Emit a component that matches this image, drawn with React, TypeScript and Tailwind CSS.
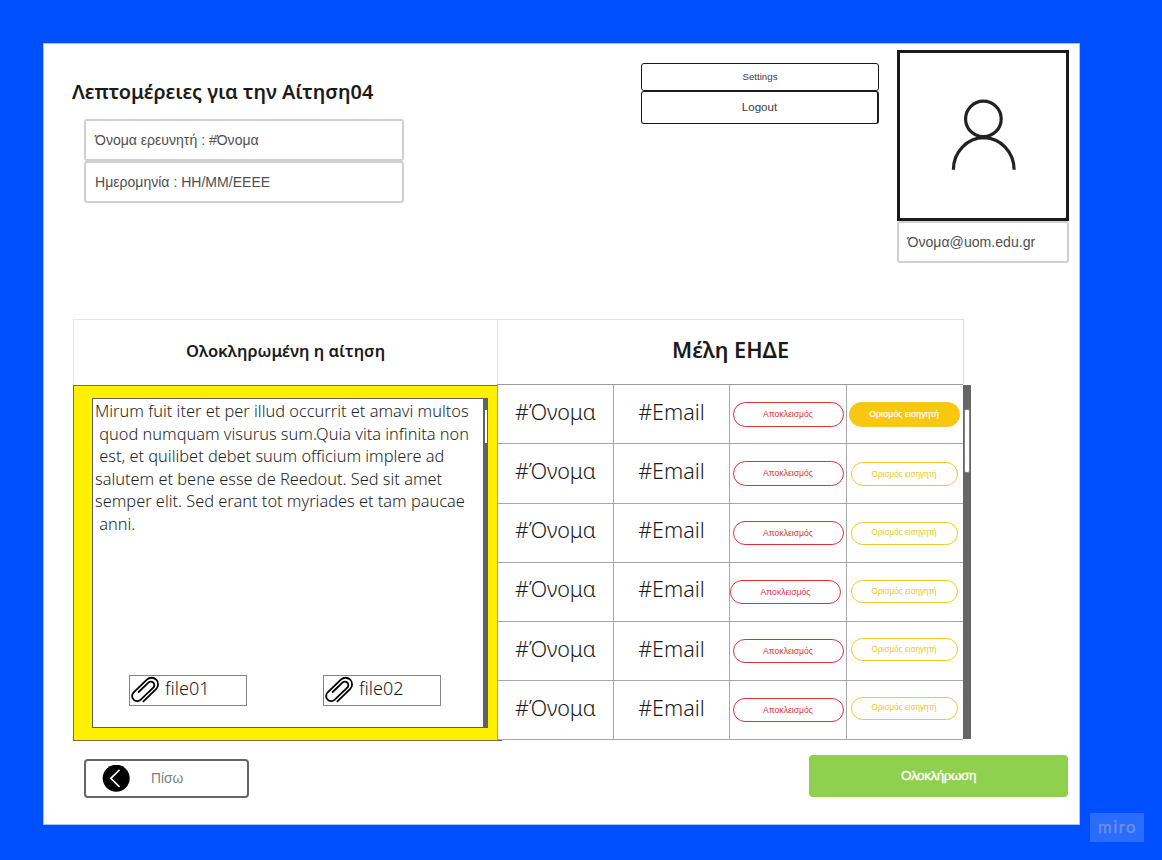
const noto = "font-['Noto_Sans',sans-serif]";

const members = [
  { h: "h-[59px]", text: "pb-[4px]", red: "h-[25px] mt-[1px]", redX: "", yellow: "h-[25px] w-[111px] mt-[1px] bg-[#fac710] text-white text-[8.8px] font-medium [-webkit-text-stroke:0.2px_#fff]" },
  { h: "h-[60px]", text: "pb-[4px]", red: "h-[25px]", redX: "", yellow: "h-[24px] w-[107px] mt-[1px] pt-[2px] text-[#ecc41c] text-[8.2px]" },
  { h: "h-[59px]", text: "pb-[6px]", red: "h-[24px]", redX: "", yellow: "h-[23px] w-[107px] pt-[1px] text-[#ecc41c] text-[8.2px]" },
  { h: "h-[59px]", text: "pb-[6px]", red: "h-[24px]", redX: "mr-[5px]", yellow: "h-[23px] w-[107px] -mt-[1px] pt-[1px] text-[#ecc41c] text-[8.2px]" },
  { h: "h-[59px]", text: "pb-[4px]", red: "h-[24px]", redX: "", yellow: "h-[23px] w-[107px] -mt-[3px] pt-[1px] text-[#ecc41c] text-[8.2px]" },
  { h: "h-[59px]", text: "pb-[4px]", red: "h-[24px]", redX: "", yellow: "h-[23px] w-[107px] -mt-[4px] pt-[1px] text-[#ecc41c] text-[8.2px]" },
];

const lines = [
  "Mirum fuit iter et per illud occurrit et amavi multos",
  " quod numquam visurus sum.Quia vita infinita non",
  " est, et quilibet debet suum officium implere ad",
  "salutem et bene esse de Reedout. Sed sit amet",
  "semper elit. Sed erant tot myriades et tam paucae",
  " anni.",
];

function Clip() {
  return (
    <svg width="30" height="30" viewBox="-15 -15 30 30" fill="none" stroke="#000" strokeWidth="1.8" strokeLinecap="round">
      <path
        transform="translate(0.3 0.3) rotate(46)"
        d="M6.6 9V-8.6A6.6 6.6 0 0 0 -6.6 -8.6V9.8A5.1 5.1 0 0 0 3.6 9.8V-7.6A3.5 3.5 0 0 0 -3.4 -7.6V6"
      />
    </svg>
  );
}

function FileBox({ name }: { name: string }) {
  return (
    <div className="flex h-[31px] w-[118px] border border-[#858585] bg-white">
      <div className="-mt-px">
        <Clip />
      </div>
      <span className={`${noto} ml-[5px] text-[18px] font-light leading-[24px]`}>{name}</span>
    </div>
  );
}

export default function App() {
  return (
    <div className="relative h-[860px] w-[1162px] overflow-hidden bg-[#0050ff] pl-[43px] pt-[43px] font-['Liberation_Sans',sans-serif] text-[#1a1a1a]">
      <main className="flex h-[782px] w-[1037px] flex-col border border-[#a8c4f5] bg-white">
        <header className="flex h-[275px] shrink-0 items-start">
          <div className="ml-[28px] w-[569px] pt-[35px]">
            <h1 className={`${noto} text-[19.9px] font-semibold leading-[26px]`}>Λεπτομέρειες για την Αίτηση04</h1>
            <div className="ml-[12px] mt-[14px] w-[320px] text-[14.05px] text-[#505050]">
              <div className="flex h-[42px] items-center rounded-[3px] border-2 border-[#d0d0d0] pl-[9px] pt-[2px]">Όνομα ερευνητή : #Όνομα</div>
              <div className="flex h-[42px] items-center rounded-[3px] border-2 border-[#d0d0d0] pl-[9px] pt-[2px]">Ημερομηνία : HH/MM/EEEE</div>
            </div>
          </div>
          <div className="mt-[19px] w-[238px] text-[#404040]">
            <div className="flex h-[28px] items-center justify-center rounded-[3px] border border-b-[1.5px] border-[#1a1a1a] text-[9.7px]">Settings</div>
            <div className="flex h-[33px] items-center justify-center rounded-[3px] border-b-[1.5px] border-l border-r-2 border-t-[1.5px] border-[#1a1a1a] pb-[2px] text-[11.6px]">Logout</div>
          </div>
          <div className="ml-[18px] mt-[6px] w-[172px]">
            <div className="flex h-[171px] items-center justify-center border-[3px] border-[#1a1a1a]">
              <svg width="80" height="80" viewBox="943.3 95.5 80 80" fill="none" stroke="#222" strokeWidth="3.2">
                <circle cx="983.7" cy="118.4" r="17.8" />
                <path d="M953.7 169.2A30.7 32 0 0 1 984.4 137.2A30.7 32 0 0 1 1014.4 169.2" />
              </svg>
            </div>
            <div className="flex h-[42px] items-center rounded-[3px] border-2 border-[#d0d0d0] pl-[8.5px] pt-[2px] text-[14.1px] text-[#505050]">Όνομα@uom.edu.gr</div>
          </div>
        </header>

        <section className="ml-[29px] flex h-[422px] w-[898px] shrink-0">
          <div className="relative w-[424px]">
            <div className={`${noto} flex h-[66px] items-center justify-center border-l border-t border-[#e6e6e6] pb-[2px] text-[16.55px] font-semibold`}>
              Ολοκληρωμένη η αίτηση
            </div>
            <div className="h-[356px] border border-r-0 border-[#77742e] bg-[#fff000] pl-[18px] pt-[12px]">
              <div className="flex h-[330px] w-[396px] border border-r-0 border-[#606060] bg-white">
                <div className="flex w-[390px] flex-col">
                  <div className={`${noto} h-[276px] pl-[2px] pt-[1px] text-[16.38px] font-light leading-[22.6px] text-[#1f1f1f]`}>
                    {lines.map((line) => (
                      <div key={line} className="whitespace-pre">{line}</div>
                    ))}
                  </div>
                  <div className="ml-[36px] flex gap-[76px]">
                    <FileBox name="file01" />
                    <FileBox name="file02" />
                  </div>
                </div>
                <div className="flex w-[5px] flex-col items-end bg-[#626262] pt-[11px]">
                  <div className="mr-px h-[33px] w-[2px] bg-white" />
                </div>
              </div>
            </div>
            <div className="absolute bottom-0 left-[424px] h-px w-[5px] bg-[#666]" />
          </div>

          <div className="w-[466px]">
            <div className={`${noto} flex h-[65px] w-[467px] items-center justify-center border-x border-t border-[#e0e0e0] pb-[3px] text-[21.7px] font-semibold`}>
              Μέλη ΕΗΔΕ
            </div>
            <div className="border-l border-t border-[#9a9a9a]">
              {members.map((m, i) => (
                <div key={i} className={`${m.h} flex border-b border-[#a8a8a8]`}>
                  <div className={`${noto} ${m.text} flex w-[116px] items-center justify-center border-r border-[#a8a8a8] text-[21.5px] font-light`}>#Όνομα</div>
                  <div className={`${noto} ${m.text} flex w-[116px] items-center justify-center border-r border-[#a8a8a8] text-[21.5px] font-light`}>#Email</div>
                  <div className="flex w-[117px] items-center justify-center border-r border-[#a8a8a8]">
                    <div className={`${m.red} ${m.redX} flex w-[111px] shrink-0 items-center justify-center rounded-full border-[1.5px] border-[#dc3237] text-[8.6px] text-[#dc3237]`}>
                      Αποκλεισμός
                    </div>
                  </div>
                  <div className="flex w-[116px] items-center justify-center pr-[2px]">
                    <div className={`${m.yellow} flex items-center justify-center rounded-full border-[1.5px] border-[#f2c62c]`}>
                      Ορισμός εισηγητή
                    </div>
                  </div>
                </div>
              ))}
            </div>
          </div>

          <div className="mt-[66px] h-[354px] w-[8px] bg-[#666] pl-px pt-[24px]">
            <div className="h-[64px] w-[6px] rounded-[2px] border border-[#808080] bg-white" />
          </div>
        </section>

        <footer className="flex items-start justify-between pl-[40px] pr-[11px] pt-[14px]">
          <button className="mt-[4px] flex h-[39px] w-[165px] items-center rounded-[4px] border-2 border-[#666] pl-[15px]">
            <svg width="30" height="28" viewBox="-1 0 30 28" fill="none">
              <circle cx="14.2" cy="13.2" r="13.5" fill="#000" />
              <path d="M17.5 4.9L8.8 13.3L17.5 21.9" stroke="#fff" strokeWidth="1.6" />
            </svg>
            <span className="ml-[20px] pt-[2px] text-[13.8px] text-[#808080]">Πίσω</span>
          </button>
          <button className="flex h-[42px] w-[259px] items-center justify-center rounded-[4px] bg-[#8fd14f] pt-[1px] text-[13.5px] tracking-[-0.45px] text-white [-webkit-text-stroke:0.3px_#fff]">
            Ολοκλήρωση
          </button>
        </footer>
      </main>
      <div className="absolute left-[1090px] top-[813px] flex h-[29px] w-[54px] items-center justify-center bg-[#2a6cff] font-[Lato,sans-serif] text-[16.5px] font-medium tracking-[1.5px] text-[#6c8fe0] [-webkit-text-stroke:0.4px_#6c8fe0]">
        <span className="-mr-px">miro</span>
      </div>
    </div>
  );
}
